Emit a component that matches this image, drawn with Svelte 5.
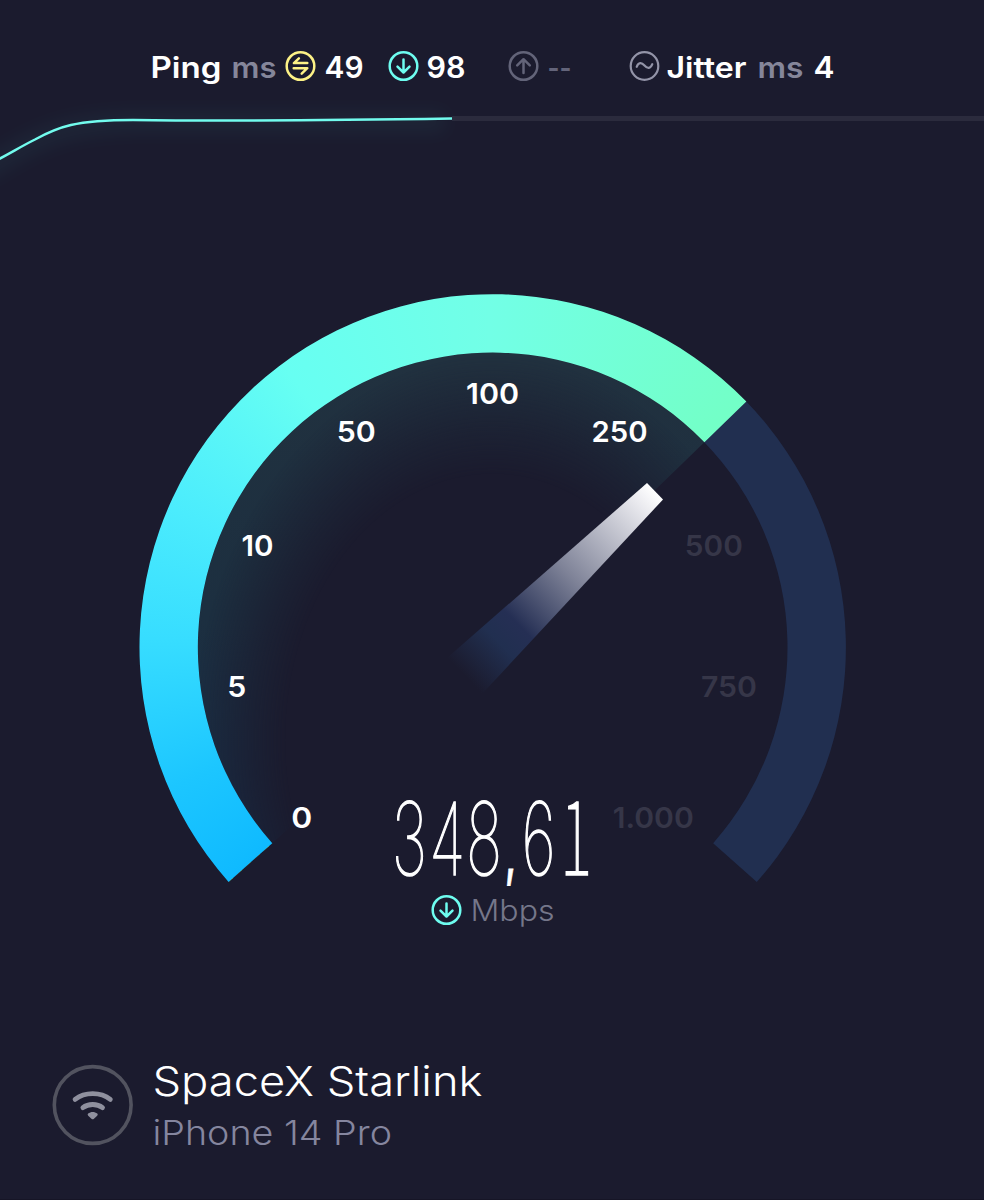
<script lang="ts">
    //Types
    type Tick = {
        label: string,
        x: number,
        y: number,
        width: number,
        value: number
    };

    // Gauge geometry
    const cx = 492.7;
    const cy = 647.4;
    const outer = 353.2;
    const inner = 294.8;
    const startAngle = 138.4;
    const endAngle = 401.6;
    const needleAngle = 315.9;

    const speed = 348.61;
    const ticks: Tick[] = [
        {value: 0, label: "0", x: 301.7, y: 828, width: 19},
        {value: 5, label: "5", x: 236.8, y: 697, width: 17},
        {value: 10, label: "10", x: 257.5, y: 556, width: 30},
        {value: 50, label: "50", x: 356.2, y: 442, width: 37},
        {value: 100, label: "100", x: 492.6, y: 404, width: 51},
        {value: 250, label: "250", x: 619.6, y: 442, width: 54},
        {value: 500, label: "500", x: 713.8, y: 556, width: 56},
        {value: 750, label: "750", x: 729, y: 697, width: 54},
        {value: 1000, label: "1.000", x: 653.3, y: 828, width: 79},
    ];

    // The readout is condensed horizontally, so every centre is divided by the same factor
    const squeeze = .6;
    const digits = [
        {char: "3", x: 409.3},
        {char: "4", x: 447.3},
        {char: "8", x: 484},
        {char: ",", x: 510.5},
        {char: "6", x: 538.6},
        {char: "1", x: 576},
    ];

    // Functions
    function point(radius: number, angle: number) {
        const rad = angle * Math.PI / 180;
        return `${(cx + radius * Math.cos(rad)).toFixed(2)} ${(cy + radius * Math.sin(rad)).toFixed(2)}`;
    }
    function ring(from: number, to: number) {
        const large = to - from > 180 ? 1 : 0;
        return `M${point(outer, from)} A${outer} ${outer} 0 ${large} 1 ${point(outer, to)}
                L${point(inner, to)} A${inner} ${inner} 0 ${large} 0 ${point(inner, from)} Z`;
    }
    function sector(from: number, to: number) {
        return `M${cx} ${cy} L${point(inner, from)} A${inner} ${inner} 0 0 1 ${point(inner, to)} Z`;
    }
</script>

{#snippet word(text: string, width: number, kind: string)}
    <svg class="word {kind}" {width} height="40">
        <text x="-.5" y="31" textLength={width} lengthAdjust="spacingAndGlyphs">{text}</text>
    </svg>
{/snippet}

{#snippet badge(kind: string)}
    <svg class="badge {kind}" width="32" height="32" viewBox="-15.5 -16 32 32">
        <circle r="13.8" />
        {#if kind === "idle"}
            <path d="M-1.6 -7.6 L-6.6 -2.9 H6.8 M-6.8 2.2 H6.8 L1.2 7.6" />
        {:else if kind === "down"}
            <path d="M0 -6.5 V6.3 M-6 .6 L0 6.5 L6 .6" />
        {:else if kind === "up"}
            <path d="M0 7 V-6.3 M-6.3 -.6 L0 -6.8 L6.3 -.6" />
        {:else}
            <path d="M-7.8 .8 C-6 -3.8 -3 -3.8 0 -.4 S6 2.8 7.8 -1.8" />
        {/if}
    </svg>
{/snippet}

<div class="screen">
    <header>
        <div class="group ping">
            {@render word("Ping", 71, "strong")}
            {@render word("ms", 45, "muted")}
            {@render badge("idle")}
            {@render word("49", 39, "strong")}
        </div>
        <div class="group down-ping">
            {@render badge("down")}
            {@render word("98", 39, "strong")}
        </div>
        <div class="group up-ping">
            {@render badge("up")}
            {@render word("--", 24, "dim")}
        </div>
        <div class="group jitter">
            {@render badge("wave")}
            {@render word("Jitter", 80, "strong")}
            {@render word("ms", 46, "muted")}
            {@render word("4", 21, "strong")}
        </div>
    </header>

    <svg class="history" width="984" height="80" viewBox="0 104 984 80">
        <defs>
            <filter id="soft" x="-10%" y="-100%" width="120%" height="300%">
                <feGaussianBlur stdDeviation="9" />
            </filter>
        </defs>
        <rect class="remaining" x="452" y="116" width="532" height="5" />
        <path class="line-glow" filter="url(#soft)" d="M-20 174 C40 136 60 125 133 122 H445" />
        <path class="line" d="M-1 159 C14 151 22 146 35 139.5 C58 127 75 120 133 120 C230 121.2 340 120.2 452 118.5" />
    </svg>

    <svg class="gauge" width="984" height="708" viewBox="0 184 984 708">
        <defs>
            <clipPath id="fill"><path d={ring(startAngle, needleAngle)} /></clipPath>
            <clipPath id="face"><path d={sector(startAngle, needleAngle)} /></clipPath>
            <linearGradient id="needle" gradientUnits="userSpaceOnUse" x1="655" y1="491" x2="464" y2="675">
                <stop offset="0" stop-color="#fff" />
                <stop offset=".08" stop-color="#e9e9ee" />
                <stop offset=".45" stop-color="#7f8398" />
                <stop offset=".72" stop-color="#252f54" />
                <stop offset=".82" stop-color="#212f50" />
                <stop offset="1" stop-color="#212f50" stop-opacity="0" />
            </linearGradient>
        </defs>

        <path class="track" d={ring(needleAngle - .3, endAngle)} />
        <foreignObject x="0" y="184" width="984" height="708" clip-path="url(#face)">
            <div class="face"></div>
        </foreignObject>
        <foreignObject x="0" y="184" width="984" height="708" clip-path="url(#fill)">
            <div class="sweep"></div>
        </foreignObject>

        {#each ticks as tick (tick.value)}
            <text
                class="tick"
                class:off={tick.value > speed}
                x={tick.x - (tick.width + 2) / 2}
                y={tick.y - .5}
                textLength={tick.width + 2}
                lengthAdjust="spacingAndGlyphs">{tick.label}</text>
        {/each}

        <path d="M647 483 L663 499.5 L482 694 L447 658 Z" fill="url(#needle)" />

        <text class="readout" y="875.5" transform="scale({squeeze} 1)">
            {#each digits as digit}<tspan
                class:comma={digit.char === ","}
                class:one={digit.char === "1"}
                x={digit.x / squeeze}>{digit.char}</tspan>{/each}
        </text>
    </svg>

    <div class="unit">
        {@render badge("down")}
        {@render word("Mbps", 84, "thin")}
    </div>

    <footer>
        <svg class="wifi" width="82" height="82" viewBox="-40.7 -41 82 82">
            <circle r="38.4" />
            <path d="M-17.6 -5.6 C-8 -13.4 8 -13.4 17.6 -5.6 M-9.8 2.7 C-4.5 -1.6 4.5 -1.6 9.8 2.7" />
            <path class="dot" d="M-4.6 8.6 C-2 6.5 2 6.5 4.6 8.6 Q5.6 9.7 4.5 10.7 L1 13.9 Q0 14.7 -1 13.9 L-4.5 10.7 Q-5.6 9.7 -4.6 8.6 Z" />
        </svg>
        <div class="names">
            <svg class="provider" width="330" height="50">
                <text x="-1.5" y="36" textLength="330" lengthAdjust="spacingAndGlyphs">SpaceX Starlink</text>
            </svg>
            <svg class="device" width="240" height="40">
                <text x="-1.5" y="35" textLength="239.5" lengthAdjust="spacingAndGlyphs">iPhone 14 Pro</text>
            </svg>
        </div>
    </footer>
</div>

<style>
    :global(body) {
        margin: 0;
        background: #1b1b2e;
    }

    .screen {
        box-sizing: border-box;
        width: 984px;
        height: 1200px;
        overflow: hidden;
        border-bottom: 1px solid #161526;
        background: #1b1b2e;
        font-family: Inter, "Open Sans", sans-serif;
    }

    svg {
        display: block;
        flex: none;
        overflow: visible;
    }

    header {
        display: flex;
        align-items: flex-start;
        height: 57px;
        padding: 47px 0 0 151px;
    }

    .group {
        display: flex;
    }

    .ping { gap: 8px; }
    .ping .word:nth-child(2) { margin-left: 2px; }
    .down-ping { gap: 7px; margin-left: 24px; }
    .up-ping { gap: 8px; margin-left: 42px; }
    .jitter { gap: 6px; margin-left: 57px; }
    .jitter .word:nth-child(3) { margin-left: 5px; }
    .jitter .word:nth-child(4) { margin-left: 4px; }

    .word {
        font-size: 29.5px;
        font-weight: 600;
    }

    .strong { fill: #fff; }
    .muted { fill: #85869a; }
    .dim { fill: #63647a; }
    .thin {
        fill: #75778a;
        font-weight: 300;
    }

    .badge {
        margin-top: 3px;
        fill: none;
        stroke-width: 2.5;
        stroke-linecap: round;
        stroke-linejoin: round;
    }

    .badge.idle { stroke: #fdf286; }
    .badge.down { stroke: #6efdf0; }
    .badge.up { stroke: #636479; }
    .badge.wave { stroke: #9394a8; stroke-width: 2.2; }

    .remaining { fill: #2b2b3d; }
    .line {
        fill: none;
        stroke: #72fcee;
        stroke-width: 2.5;
    }
    .line-glow {
        fill: none;
        stroke: #4fd5cf;
        stroke-width: 20;
        opacity: .055;
    }

    .track { fill: #212f50; }

    .face {
        width: 984px;
        height: 708px;
        background: linear-gradient(#21313f 180px, #1c2f40 430px, #182c45 660px);
        mask-image: radial-gradient(300px 385px at 492.7px 556px, transparent 69%, rgba(0, 0, 0, .32) 80%, #000 100%);
    }

    .sweep {
        width: 984px;
        height: 708px;
        background: conic-gradient(from 228.4deg at 492.7px 463.4px,
            #0fbaff 0deg, #1cc6ff 18deg, #37ddff 43deg, #4becfd 65deg,
            #67fff2 95deg, #72ffe6 131deg, #73ffc7 177deg);
    }

    .tick {
        fill: #fff;
        font-size: 29px;
        font-weight: 600;
    }
    .tick.off { fill: #363648; }

    .readout {
        fill: #fff;
        stroke: #fff;
        stroke-width: .8;
        font-size: 101px;
        font-weight: 100;
        text-anchor: middle;
    }
    .readout tspan:not(.comma):not(.one) {
        stroke-width: 1.6;
    }
    .comma {
        font-size: 56px;
        font-weight: 600;
    }
    .one {
        stroke-width: 1.4;
        font-family: "Noto Sans CJK SC", sans-serif;
        font-weight: 100;
    }

    .unit {
        display: flex;
        gap: 8px;
        padding-left: 431px;
        height: 172px;
    }
    .unit .badge { margin-top: 2px; }
    .unit .word { margin-top: -2px; }

    footer {
        display: flex;
        gap: 20px;
        padding-left: 52px;
    }

    .wifi {
        margin-top: -.5px;
        fill: none;
        stroke: #8f909e;
        stroke-width: 4.8;
        stroke-linecap: round;
    }
    .wifi circle {
        stroke: #52535f;
        stroke-width: 3.6;
    }
    .wifi .dot {
        fill: #8f909e;
        stroke: none;
    }

    .names {
        margin-top: -4px;
    }

    .provider {
        fill: #fff;
        font-size: 41px;
        font-weight: 300;
    }
    .device {
        fill: #85869f;
        font-size: 34px;
        font-weight: 300;
    }
</style>
